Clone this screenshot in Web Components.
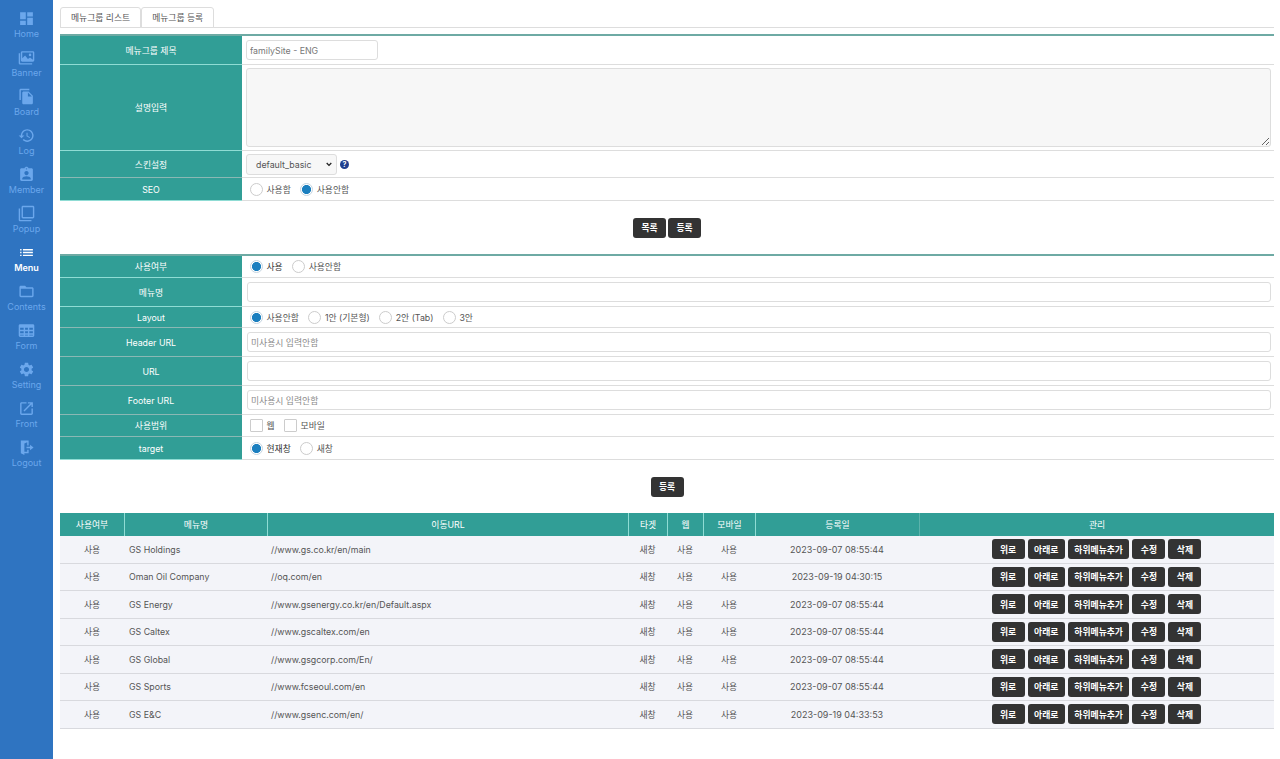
<!DOCTYPE html>
<html lang="ko">
	<head>
		<meta charset="utf-8" />
		<title>Menu</title>
		<style>
			html,
			body {
				margin: 0;
				padding: 0;
				background: #ffffff;
				color: #444444;
				font-family: Inter, 'Noto Sans CJK KR', sans-serif;
				font-size: 8.8px;
			}
		</style>
	</head>
	<body>
		<admin-layout>
			<admin-sidebar slot="side"></admin-sidebar>

			<tab-bar>
				<tab-item>메뉴그룹 리스트</tab-item>
				<tab-item>메뉴그룹 등록</tab-item>
			</tab-bar>

			<form-table style="margin-top: 6px;">
				<form-row label="메뉴그룹 제목" h="29"><text-field value="familySite - ENG" width="132"></text-field></form-row>
				<form-row label="설명입력" h="86"><area-field></area-field></form-row>
				<form-row label="스킨설정" h="27" soft>
					<select-field></select-field>
					<help-mark></help-mark>
				</form-row>
				<form-row label="SEO" h="23">
					<radio-field name="seo">사용함</radio-field>
					<radio-field name="seo" checked>사용안함</radio-field>
				</form-row>
			</form-table>

			<button-row style="height: 53px;">
				<dark-button>목록</dark-button>
				<dark-button>등록</dark-button>
			</button-row>

			<form-table>
				<form-row label="사용여부" h="22">
					<radio-field name="use" checked strong>사용</radio-field>
					<radio-field name="use">사용안함</radio-field>
				</form-row>
				<form-row label="메뉴명" h="29" wide><text-field></text-field></form-row>
				<form-row label="Layout" h="21" soft>
					<radio-field name="layout" checked>사용안함</radio-field>
					<radio-field name="layout">1안 (기본형)</radio-field>
					<radio-field name="layout">2안 (Tab)</radio-field>
					<radio-field name="layout">3안</radio-field>
				</form-row>
				<form-row label="Header URL" h="29" wide soft><text-field placeholder="미사용시 입력안함"></text-field></form-row>
				<form-row label="URL" h="29" wide soft><text-field></text-field></form-row>
				<form-row label="Footer URL" h="29" wide soft><text-field placeholder="미사용시 입력안함"></text-field></form-row>
				<form-row label="사용범위" h="22" soft>
					<radio-field box>웹</radio-field>
					<radio-field box>모바일</radio-field>
				</form-row>
				<form-row label="target" h="23">
					<radio-field name="target" checked strong>현재창</radio-field>
					<radio-field name="target">새창</radio-field>
				</form-row>
			</form-table>

			<button-row style="height: 53px;">
				<dark-button>등록</dark-button>
			</button-row>

			<menu-table></menu-table>
		</admin-layout>

		<script>
			const ICONS = {
				home: '<path d="M3 13h8V3H3v10zm0 8h8v-6H3v6zm10 0h8V11h-8v10zm0-18v6h8V3h-8z"/>',
				banner: '<path d="M1 6h2v14h17v2H3a2 2 0 0 1-2-2V6z"/><path fill-rule="evenodd" d="M6 3h15a2 2 0 0 1 2 2v11a2 2 0 0 1-2 2H6a2 2 0 0 1-2-2V5a2 2 0 0 1 2-2zm0 2v8l4-4 4 5 3-2 4 3V5H6zm11 1.5a1.8 1.8 0 1 1 0 3.6 1.8 1.8 0 0 1 0-3.6z"/>',
				board: '<path d="M16 1H4c-1.1 0-2 .9-2 2v14h2V3h12V1zm-1 4l6 6v10c0 1.1-.9 2-2 2H7.99C6.89 23 6 22.1 6 21l.01-14c0-1.1.89-2 1.99-2h7zm-1 7h5.5L14 6.5V12z"/>',
				log: '<path d="M13 3c-4.97 0-9 4.03-9 9H1l3.89 3.89.07.14L9 12H6c0-3.87 3.13-7 7-7s7 3.13 7 7-3.13 7-7 7c-1.93 0-3.68-.79-4.94-2.06l-1.42 1.42C8.27 19.99 10.51 21 13 21c4.97 0 9-4.03 9-9s-4.03-9-9-9zm-1 5v5l4.28 2.54.72-1.21-3.5-2.08V8H12z"/>',
				member: '<path d="M19 3h-4.18C14.4 1.84 13.3 1 12 1c-1.3 0-2.4.84-2.82 2H5c-1.1 0-2 .9-2 2v14c0 1.1.9 2 2 2h14c1.1 0 2-.9 2-2V5c0-1.1-.9-2-2-2zm-7 0c.55 0 1 .45 1 1s-.45 1-1 1-1-.45-1-1 .45-1 1-1zm0 4c1.66 0 3 1.34 3 3s-1.34 3-3 3-3-1.34-3-3 1.34-3 3-3zm6 12H6v-1.4c0-2 4-3.1 6-3.1s6 1.1 6 3.1V19z"/>',
				popup: '<path d="M3 5H1v16c0 1.1.9 2 2 2h16v-2H3V5zm18-4H7c-1.1 0-2 .9-2 2v14c0 1.1.9 2 2 2h14c1.1 0 2-.9 2-2V3c0-1.1-.9-2-2-2zm0 16H7V3h14v14z"/>',
				menu: '<path d="M3 13h2v-2H3v2zm0 4h2v-2H3v2zm0-8h2V7H3v2zm4 4h14v-2H7v2zm0 4h14v-2H7v2zM7 7v2h14V7H7z"/>',
				contents: '<path d="M20 6h-8l-2-2H4c-1.1 0-1.99.9-1.99 2L2 18c0 1.1.9 2 2 2h16c1.1 0 2-.9 2-2V8c0-1.1-.9-2-2-2zm0 12H4V8h16v10z"/>',
				form: '<path fill-rule="evenodd" d="M3 3h18a2 2 0 0 1 2 2v14a2 2 0 0 1-2 2H3a2 2 0 0 1-2-2V5a2 2 0 0 1 2-2zm0 5v3h5V8H3zm7 0v3h4V8h-4zm6 0v3h5V8h-5zM3 13v3h5v-3H3zm7 0v3h4v-3h-4zm6 0v3h5v-3h-5zM3 18v1h5v-1H3zm7 0v1h4v-1h-4zm6 0v1h5v-1h-5z"/>',
				setting: '<path d="M19.14 12.94c.04-.3.06-.61.06-.94 0-.32-.02-.64-.07-.94l2.03-1.58c.18-.14.23-.41.12-.61l-1.92-3.32c-.12-.22-.37-.29-.59-.22l-2.39.96c-.5-.38-1.03-.7-1.62-.94l-.36-2.54c-.04-.24-.24-.41-.48-.41h-3.84c-.24 0-.43.17-.47.41l-.36 2.54c-.59.24-1.13.57-1.62.94l-2.39-.96c-.22-.08-.47 0-.59.22L2.74 8.87c-.12.21-.08.47.12.61l2.03 1.58c-.05.3-.09.63-.09.94s.02.64.07.94l-2.03 1.58c-.18.14-.23.41-.12.61l1.92 3.32c.12.22.37.29.59.22l2.39-.96c.5.38 1.03.7 1.62.94l.36 2.54c.05.24.24.41.48.41h3.84c.24 0 .44-.17.47-.41l.36-2.54c.59-.24 1.13-.56 1.62-.94l2.39.96c.22.08.47 0 .59-.22l1.92-3.32c.12-.22.07-.47-.12-.61l-2.01-1.58zM12 15.6c-1.98 0-3.6-1.62-3.6-3.6s1.62-3.6 3.6-3.6 3.6 1.62 3.6 3.6-1.62 3.6-3.6 3.6z"/>',
				front: '<path d="M19 19H5V5h7V3H5c-1.11 0-2 .9-2 2v14c0 1.1.89 2 2 2h14c1.1 0 2-.9 2-2v-7h-2v7zM14 3v2h3.59l-9.83 9.83 1.41 1.41L19 6.41V10h2V3h-7z"/>',
				logout: '<path d="M4 2h11v7h-2V4.5L9 6.5V18h4v-3h2v5H9v2.5L4 20V2z"/><path d="M17 8l5 4-5 4v-3h-5v-2h5V8z"/>'
			};

			const NAV = [
				['home', 'Home'], ['banner', 'Banner'], ['board', 'Board'], ['log', 'Log'],
				['member', 'Member'], ['popup', 'Popup'], ['menu', 'Menu'], ['contents', 'Contents'],
				['form', 'Form'], ['setting', 'Setting'], ['front', 'Front'], ['logout', 'Logout']
			];

			const MENUS = [
				['GS Holdings', '//www.gs.co.kr/en/main', '2023-09-07 08:55:44'],
				['Oman Oil Company', '//oq.com/en', '2023-09-19 04:30:15'],
				['GS Energy', '//www.gsenergy.co.kr/en/Default.aspx', '2023-09-07 08:55:44'],
				['GS Caltex', '//www.gscaltex.com/en', '2023-09-07 08:55:44'],
				['GS Global', '//www.gsgcorp.com/En/', '2023-09-07 08:55:44'],
				['GS Sports', '//www.fcseoul.com/en', '2023-09-07 08:55:44'],
				['GS E&C', '//www.gsenc.com/en/', '2023-09-19 04:33:53']
			];

			class Base extends HTMLElement {
				constructor() {
					super();
					this.attachShadow({ mode: 'open' });
				}

				render(html) {
					this.shadowRoot.innerHTML = html;
				}
			}

			class AdminLayout extends Base {
				connectedCallback() {
					this.render(`
						<style>
							:host { display: flex; min-height: 100vh; }
							main { flex: 1; min-width: 0; padding: 7px 6px 30px 7px; }
						</style>
						<slot name="side"></slot>
						<main><slot></slot></main>
					`);
				}
			}

			class AdminSidebar extends Base {
				connectedCallback() {
					this.render(`
						<style>
							:host {
								display: flex;
								flex-direction: column;
								flex: 0 0 53px;
								box-sizing: border-box;
								padding-top: 10px;
								background: #2f74c1;
							}
							a {
								display: flex;
								flex-direction: column;
								align-items: center;
								height: 39px;
								color: #6ba7ec;
								font-size: 9px;
								line-height: 12px;
								text-decoration: none;
							}
							a.on { color: #ffffff; font-weight: 600; }
							svg { display: block; width: 17px; height: 17px; margin-bottom: 1px; fill: currentColor; }
						</style>
						${NAV.map(([icon, label]) => `
							<a href="#" class="${label === 'Menu' ? 'on' : ''}">
								<svg viewBox="0 0 24 24">${ICONS[icon]}</svg>
								<span>${label}</span>
							</a>
						`).join('')}
					`);
				}
			}

			class TabBar extends Base {
				connectedCallback() {
					this.render(`
						<style>
							:host { display: flex; box-sizing: border-box; height: 21px; border-bottom: 1px solid #dddddd; }
						</style>
						<slot></slot>
					`);
				}
			}

			class TabItem extends Base {
				connectedCallback() {
					this.render(`
						<style>
							:host {
								display: flex;
								align-items: center;
								box-sizing: border-box;
								height: 21px;
								padding: 0 10px;
								border: 1px solid #dddddd;
								border-radius: 3px 3px 0 0;
								background: #ffffff;
								color: #555555;
							}
						</style>
						<slot></slot>
					`);
				}
			}

			class FormTable extends Base {
				connectedCallback() {
					this.render(`
						<style>
							:host { display: block; border-top: 2px solid #6eaaa4; }
						</style>
						<slot></slot>
					`);
				}
			}

			class FormRow extends Base {
				connectedCallback() {
					const h = this.getAttribute('h');
					const line = this.hasAttribute('soft') ? '#8ab8b4' : '#8fdcd4';
					this.render(`
						<style>
							:host {
								display: grid;
								grid-template-columns: 182px 1fr;
								height: ${h}px;
							}
							.th {
								display: flex;
								align-items: center;
								justify-content: center;
								box-sizing: border-box;
								background: #319e96;
								border-bottom: 1px solid ${line};
								color: #ffffff;
							}
							.td {
								display: flex;
								align-items: center;
								box-sizing: border-box;
								padding: 0 3px 0 ${this.hasAttribute('wide') ? 5 : 4}px;
								border-bottom: 1px solid #dddddd;
								min-width: 0;
							}
						</style>
						<div class="th">${this.getAttribute('label')}</div>
						<div class="td"><slot></slot></div>
					`);
				}
			}

			class TextField extends Base {
				connectedCallback() {
					const width = this.getAttribute('width');
					const value = this.getAttribute('value') || '';
					const placeholder = this.getAttribute('placeholder') || '';
					this.render(`
						<style>
							:host { display: block; flex: ${width ? `0 0 ${width}px` : '1'}; }
							input {
								display: block;
								box-sizing: border-box;
								width: 100%;
								height: 20px;
								padding: 0 3px;
								border: 1px solid #dddddd;
								border-radius: 3px;
								background: #ffffff;
								color: #777777;
								font: 8.8px Inter, 'Noto Sans CJK KR', sans-serif;
							}
							input::placeholder { color: #8a8a8a; opacity: 1; }
						</style>
						<input type="text" value="${value}" placeholder="${placeholder}" />
					`);
				}
			}

			class AreaField extends Base {
				connectedCallback() {
					this.render(`
						<style>
							:host { display: block; flex: 1; }
							textarea {
								display: block;
								box-sizing: border-box;
								width: 100%;
								height: 79px;
								margin: 0;
								border: 1px solid #dddddd;
								border-radius: 3px;
								background: #f7f7f7;
							}
						</style>
						<textarea></textarea>
					`);
				}
			}

			class SelectField extends Base {
				connectedCallback() {
					this.render(`
						<style>
							:host { display: block; position: relative; flex: 0 0 91px; }
							select {
								appearance: none;
								display: block;
								box-sizing: border-box;
								width: 100%;
								height: 21px;
								padding: 0 9px;
								border: 1px solid #dddddd;
								border-radius: 3px;
								background-color: #f7f7f7;
								color: #555555;
								font: 8.8px Inter, 'Noto Sans CJK KR', sans-serif;
							}
							svg { position: absolute; top: 8px; right: 5px; width: 6px; height: 5px; pointer-events: none; }
						</style>
						<select><option>default_basic</option></select>
						<svg viewBox="0 0 6 5"><path d="M.7 1l2.3 2.4L5.3 1" fill="none" stroke="#222222" stroke-width="1.3"/></svg>
					`);
				}
			}

			class HelpMark extends Base {
				connectedCallback() {
					this.render(`
						<style>
							:host {
								display: flex;
								align-items: center;
								justify-content: center;
								width: 9px;
								height: 9px;
								margin-left: 3px;
								border-radius: 50%;
								background: #1f3f8f;
								color: #ffffff;
								font-size: 7px;
								font-weight: 700;
								line-height: 9px;
							}
						</style>
						?
					`);
				}
			}

			class RadioField extends Base {
				connectedCallback() {
					const box = this.hasAttribute('box');
					const name = this.getAttribute('name') || '';
					const checked = this.hasAttribute('checked') ? 'checked' : '';
					this.render(`
						<style>
							:host {
								display: inline-flex;
								align-items: center;
								margin: 0 5.5px 0 4px;
								color: ${this.hasAttribute('strong') ? '#333333' : '#555555'};
							}
							input {
								appearance: none;
								box-sizing: border-box;
								width: 13px;
								height: 13px;
								margin: 0 3.5px 0 0;
								border: 1px solid #cccccc;
								border-radius: ${box ? '1px' : '50%'};
								background: #ffffff;
							}
							input:checked {
								border-color: #c4d4e0;
								background: radial-gradient(circle, #1b7fbf 0 4.2px, #ffffff 4.9px);
							}
						</style>
						<label style="display: contents;">
							<input type="${box ? 'checkbox' : 'radio'}" name="${name}" ${checked} />
							<slot></slot>
						</label>
					`);
				}
			}

			class ButtonRow extends Base {
				connectedCallback() {
					this.render(`
						<style>
							:host { display: flex; align-items: center; justify-content: center; gap: 2px; }
						</style>
						<slot></slot>
					`);
				}
			}

			class DarkButton extends Base {
				connectedCallback() {
					this.render(`
						<style>
							:host { display: block; }
							button {
								display: block;
								box-sizing: border-box;
								min-width: 33px;
								height: 20px;
								padding: 0 6.5px;
								border: 0;
								border-radius: 3px;
								background: #333333;
								color: #ffffff;
								font: 600 8.8px Inter, 'Noto Sans CJK KR', sans-serif;
							}
						</style>
						<button type="button"><slot></slot></button>
					`);
				}
			}

			class MenuTable extends Base {
				connectedCallback() {
					const head = ['사용여부', '메뉴명', '이동URL', '타겟', '웹', '모바일', '등록일', '관리'];
					this.render(`
						<style>
							:host {
								display: block;
								--cols: 64px 143px 361px 39px 36px 52px 164px 1fr;
							}
							.row { display: grid; grid-template-columns: var(--cols); }
							.head {
								height: 23px;
								background: #319e96;
								color: #ffffff;
							}
							.head span {
								display: flex;
								align-items: center;
								justify-content: center;
								border-left: 1px solid #8fdcd4;
							}
							.head span:first-child { border-left: 0; }
							.head span:last-child { border-left-color: #5cb3ac; }
							.body {
								box-sizing: border-box;
								height: 27.5px;
								background: #f3f4f9;
								border-bottom: 1px solid #d8d9de;
								color: #555555;
							}
							.body > span { display: flex; align-items: center; justify-content: center; }
							.body > .name { justify-content: flex-start; padding-left: 5px; }
							.body > .url { justify-content: flex-start; padding-left: 4px; }
							.body > .date { font-size: 9px; }
							.tools { gap: 3px; }
						</style>
						<div class="row head">${head.map((text) => `<span>${text}</span>`).join('')}</div>
						${MENUS.map(([name, url, date]) => `
							<div class="row body">
								<span>사용</span>
								<span class="name">${name.replace('&', '&amp;')}</span>
								<span class="url">${url}</span>
								<span>새창</span>
								<span>사용</span>
								<span>사용</span>
								<span class="date">${date}</span>
								<span class="tools">
									<dark-button>위로</dark-button>
									<dark-button>아래로</dark-button>
									<dark-button>하위메뉴추가</dark-button>
									<dark-button>수정</dark-button>
									<dark-button>삭제</dark-button>
								</span>
							</div>
						`).join('')}
					`);
				}
			}

			customElements.define('admin-layout', AdminLayout);
			customElements.define('admin-sidebar', AdminSidebar);
			customElements.define('tab-bar', TabBar);
			customElements.define('tab-item', TabItem);
			customElements.define('form-table', FormTable);
			customElements.define('form-row', FormRow);
			customElements.define('text-field', TextField);
			customElements.define('area-field', AreaField);
			customElements.define('select-field', SelectField);
			customElements.define('help-mark', HelpMark);
			customElements.define('radio-field', RadioField);
			customElements.define('button-row', ButtonRow);
			customElements.define('dark-button', DarkButton);
			customElements.define('menu-table', MenuTable);
		</script>
	</body>
</html>
